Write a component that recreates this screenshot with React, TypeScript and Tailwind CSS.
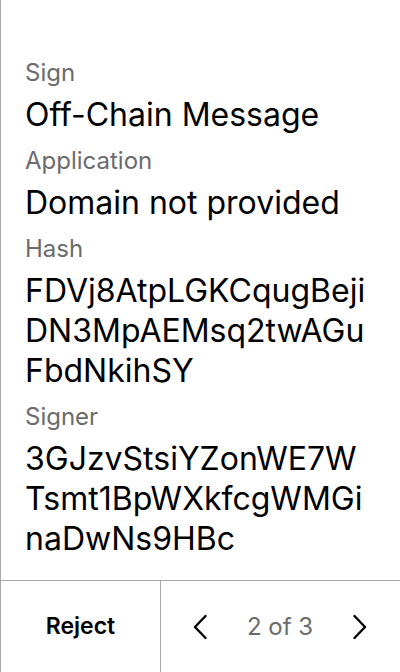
import React from "react";

function Field({ label, lines }: { label: string; lines: string[] }) {
  return (
    <div className="flex flex-col">
      <div className="text-[24px] leading-[45px] text-[#6b6b6b]">{label}</div>
      {lines.map((l) => (
        <div key={l} className="text-[32px] leading-[40px] text-black whitespace-nowrap">
          {l}
        </div>
      ))}
    </div>
  );
}

export default function App() {
  return (
    <div
      className="w-[400px] h-[672px] bg-white border-l border-[#a8a8a8] flex flex-col"
      style={{ fontFamily: "Inter, 'Noto Sans', sans-serif" }}
    >
      <div className="flex-1 flex flex-col justify-end pl-[24px] pb-[21px] gap-[3px]">
        <Field label="Sign" lines={["Off-Chain Message"]} />
        <Field label="Application" lines={["Domain not provided"]} />
        <Field label="Hash" lines={["FDVj8AtpLGKCqugBeji", "DN3MpAEMsq2twAGu", "FbdNkihSY"]} />
        <Field label="Signer" lines={["3GJzvStsiYZonWE7W", "Tsmt1BpWXkfcgWMGi", "naDwNs9HBc"]} />
      </div>
      <div className="h-[92px] border-t border-[#a8a8a8] flex">
        <button className="w-[160px] border-r border-[#a8a8a8] flex items-center justify-center text-[23px] font-semibold text-black">
          Reject
        </button>
        <div className="flex-1 flex items-center justify-between pl-[32px] pr-[33px]">
          <svg width="14" height="26" viewBox="0 0 14 26" fill="none" stroke="black" strokeWidth="2.4" strokeLinecap="round" strokeLinejoin="round">
            <path d="M12.5 2 L2 13 L12.5 24" />
          </svg>
          <span className="text-[24px] text-[#6b6b6b]">2 of 3</span>
          <svg width="14" height="26" viewBox="0 0 14 26" fill="none" stroke="black" strokeWidth="2.4" strokeLinecap="round" strokeLinejoin="round">
            <path d="M1.5 2 L12 13 L1.5 24" />
          </svg>
        </div>
      </div>
    </div>
  );
}
